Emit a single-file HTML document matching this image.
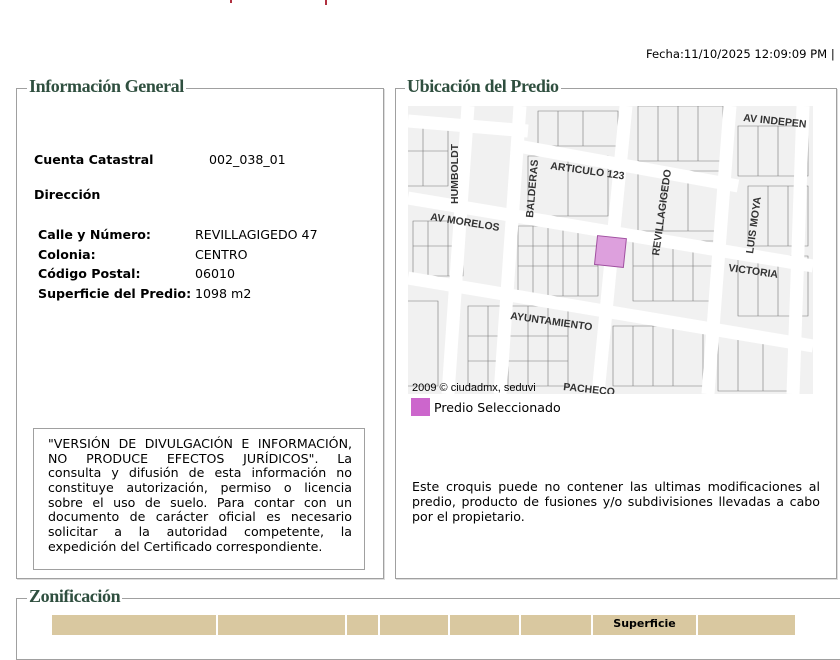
<!DOCTYPE html>
<html><head><meta charset="utf-8"><style>
body{margin:0;width:840px;height:630px;overflow:hidden;background:#fff;font-family:"DejaVu Sans",Verdana,sans-serif;font-size:12.6px;color:#000;position:relative}
.a{position:absolute}
.fs{position:absolute;border:1px solid #a0a0a0;box-shadow:1px 1px 0 #ddd}
.lg{position:absolute;background:#fff;font-family:"Liberation Serif",serif;font-weight:bold;font-size:18px;color:#2f4f3f;padding:0 2px;letter-spacing:-0.4px}
.j div{text-align:justify;text-align-last:justify;white-space:nowrap;height:14.7px}
.j div:last-child{text-align-last:left}
</style></head><body>
<div class="a" style="left:230px;top:0;width:2px;height:3px;background:#b03040"></div>
<div class="a" style="left:325px;top:0;width:2px;height:5px;background:#b03040"></div>
<div class="a" style="left:646px;top:47px;font-size:11.6px;">Fecha:11/10/2025 12:09:09 PM |</div>

<div class="fs" style="left:16px;top:88px;width:366px;height:489px"></div>
<div class="lg" style="left:27px;top:76px">Información General</div>
<div class="a" style="left:34px;top:152px;font-weight:bold">Cuenta Catastral</div>
<div class="a" style="left:209px;top:152px">002_038_01</div>
<div class="a" style="left:34px;top:187px;font-weight:bold">Dirección</div>
<div class="a" style="left:38px;top:225px;font-weight:bold;line-height:19.5px">Calle y Número:<br>Colonia:<br>Código Postal:<br>Superficie del Predio:</div>
<div class="a" style="left:195px;top:225px;line-height:19.5px">REVILLAGIGEDO 47<br>CENTRO<br>06010<br>1098 m2</div>
<div class="a" style="left:33px;top:428px;width:332px;height:142px;border:1px solid #a0a0a0;box-sizing:border-box"></div>
<div class="a j" style="left:48px;top:437px;width:304px;line-height:14.7px">
<div>"VERSIÓN DE DIVULGACIÓN E INFORMACIÓN,</div>
<div>NO PRODUCE EFECTOS JURÍDICOS". La</div>
<div>consulta y difusión de esta información no</div>
<div>constituye autorización, permiso o licencia</div>
<div>sobre el uso de suelo. Para contar con un</div>
<div>documento de carácter oficial es necesario</div>
<div>solicitar a la autoridad competente, la</div>
<div>expedición del Certificado correspondiente.</div>
</div>

<div class="fs" style="left:395px;top:88px;width:440px;height:489px"></div>
<div class="lg" style="left:405px;top:76px">Ubicación del Predio</div>
<svg class="a" style="left:408px;top:106px" width="405" height="288" viewBox="0 0 405 288">
<rect width="405" height="288" fill="#f1f1f1"/>
<g stroke="#777" stroke-width="0.6" fill="none">
<path d="M0 20 h40 v60 h-40 M15 20 v60 M0 45 h40 M130 5 h80 v35 h-80Z M150 5 v35 M175 5 v35 M230 0 h85 v55 h-85Z M250 0 v55 M270 0 v55 M290 0 v55 M330 20 h70 v50 h-70Z M350 20 v50 M370 20 v50"/>
<path d="M5 115 h50 v55 h-50Z M20 115 v55 M40 115 v55 M5 140 h50 M110 120 h80 v70 h-80Z M125 120 v70 M140 120 v70 M155 120 v70 M170 120 v70 M110 140 h80 M110 160 h80"/>
<path d="M225 135 h85 v60 h-85Z M245 135 v60 M265 135 v60 M285 135 v60 M225 160 h85 M330 150 h70 v60 h-70Z M350 150 v60 M370 150 v60"/>
<path d="M0 195 h30 v85 h-30 M60 200 h100 v80 h-100Z M80 200 v80 M100 200 v80 M120 200 v80 M140 200 v80 M60 230 h100 M60 255 h100 M205 220 h90 v60 h-90Z M225 220 v60 M245 220 v60 M265 220 v60 M310 230 h80 v55 h-80Z M330 230 v55 M355 230 v55"/>
<path d="M120 50 h80 v60 h-80Z M160 50 v60 M230 65 h85 v60 h-85Z M255 65 v60 M280 65 v60 M340 80 h60 v60 h-60Z M360 80 v60 M380 80 v60"/>
</g>
<g stroke="#fff" stroke-width="13" fill="none">
<path d="M0 92 L405 160"/><path d="M0 172 L405 240"/><path d="M0 15 L120 25"/>
<path d="M110 40 L330 80"/>
<path d="M60 0 L40 288"/><path d="M112 0 L92 288"/><path d="M218 0 L190 288"/><path d="M322 0 L300 288"/><path d="M395 0 L385 288"/>
</g>
<rect x="188" y="131" width="29" height="29" fill="#dda0dd" stroke="#a050a0" transform="rotate(6 202 145)"/>
<g font-family="Liberation Sans,sans-serif" font-weight="bold" font-size="10.5" fill="#333">
<text x="50" y="98" transform="rotate(-90 50 98)">HUMBOLDT</text>
<text x="125" y="112" transform="rotate(-85 125 112)">BALDERAS</text>
<text x="142" y="63" transform="rotate(8 142 63)">ARTICULO 123</text>
<text x="22" y="114" transform="rotate(9 22 114)">AV MORELOS</text>
<text x="251" y="150" transform="rotate(-82 251 150)">REVILLAGIGEDO</text>
<text x="345" y="148" transform="rotate(-82 345 148)">LUIS MOYA</text>
<text x="320" y="165" transform="rotate(8 320 165)">VICTORIA</text>
<text x="102" y="213" transform="rotate(8 102 213)">AYUNTAMIENTO</text>
<text x="335" y="15" transform="rotate(6 335 15)">AV INDEPEN</text>
<text x="155" y="284" transform="rotate(6 155 284)">PACHECO</text>
</g>
<text x="4" y="285" font-family="Liberation Sans,sans-serif" font-size="11" fill="#000">2009 © ciudadmx, seduvi</text>
</svg>
<div class="a" style="left:411px;top:398px;width:19px;height:18px;background:#cc66cc"></div>
<div class="a" style="left:434px;top:400px">Predio Seleccionado</div>
<div class="a" style="left:412px;top:479px;width:408px;line-height:15px;text-align:justify">Este croquis puede no contener las ultimas modificaciones al predio, producto de fusiones y/o subdivisiones llevadas a cabo por el propietario.</div>

<div class="fs" style="left:16px;top:598px;width:830px;height:60px"></div>
<div class="lg" style="left:27px;top:586px">Zonificación</div>
<div class="a" style="left:52px;top:615px;width:164px;height:20px;background:#d9c8a0"></div>
<div class="a" style="left:218px;top:615px;width:127px;height:20px;background:#d9c8a0"></div>
<div class="a" style="left:347px;top:615px;width:31px;height:20px;background:#d9c8a0"></div>
<div class="a" style="left:380px;top:615px;width:68px;height:20px;background:#d9c8a0"></div>
<div class="a" style="left:450px;top:615px;width:69px;height:20px;background:#d9c8a0"></div>
<div class="a" style="left:521px;top:615px;width:70px;height:20px;background:#d9c8a0"></div>
<div class="a" style="left:593px;top:615px;width:103px;height:20px;background:#d9c8a0;text-align:center;font-weight:bold;font-size:11px;line-height:18px">Superficie</div>
<div class="a" style="left:698px;top:615px;width:97px;height:20px;background:#d9c8a0"></div>
</body></html>
